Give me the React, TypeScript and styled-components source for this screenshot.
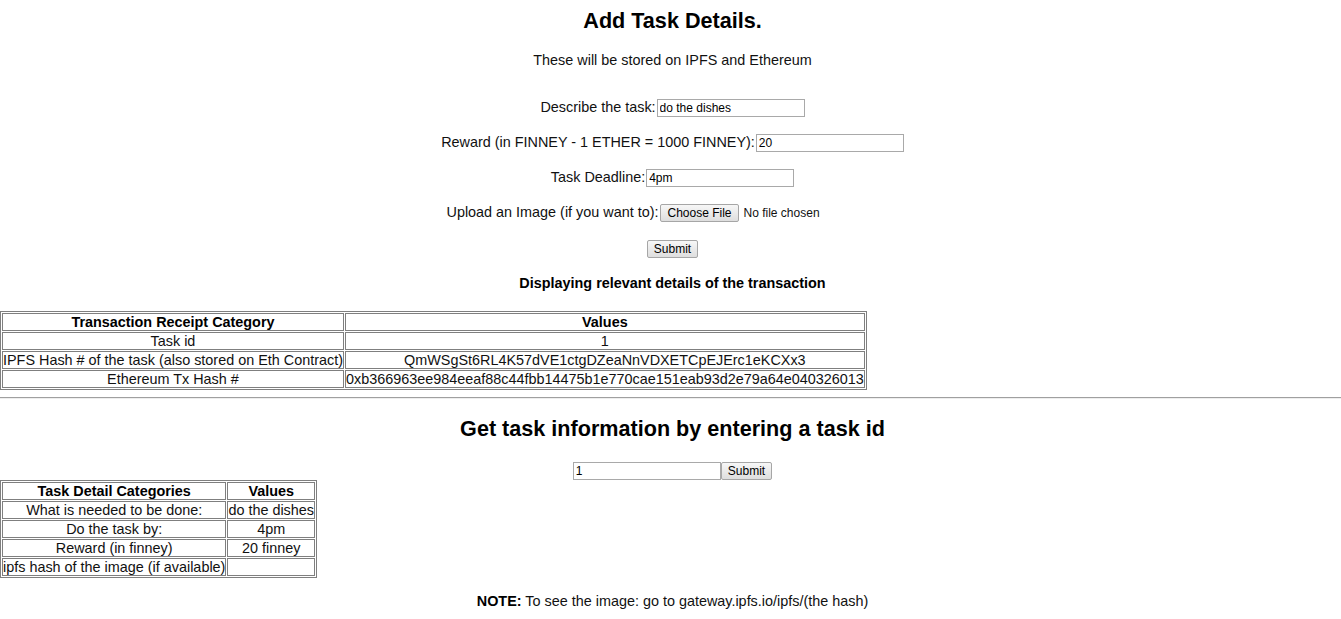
import React from "react";
import styled, { createGlobalStyle } from "styled-components";

const GlobalStyle = createGlobalStyle`
  html, body {
    margin: 0;
    padding: 0;
    background: #ffffff;
  }
  body {
    font-family: "Liberation Sans", Arial, sans-serif;
    font-size: 14.4px;
    color: #000000;
  }
`;

const Page = styled.div`
  display: flex;
  flex-direction: column;
  padding-top: 8px;
`;

const Title = styled.h2<{ $mt?: number }>`
  margin: ${(p) => p.$mt ?? 0}px 0 0;
  padding-left: 4px;
  text-align: center;
  font-size: 21.6px;
  line-height: 25px;
  font-weight: bold;
  color: #000;
`;

const Text = styled.p<{ $mt: number }>`
  margin: ${(p) => p.$mt}px 0 0;
  padding-left: 4px;
  text-align: center;
  line-height: 17px;
  color: #111;
`;

const Heading = styled.h4<{ $mt: number }>`
  margin: ${(p) => p.$mt}px 0 0;
  padding-left: 4px;
  text-align: center;
  font-size: 14.4px;
  line-height: 17px;
  font-weight: bold;
  color: #000;
`;

const FieldRow = styled.div<{ $mt: number }>`
  display: flex;
  justify-content: center;
  align-items: baseline;
  height: 18px;
  margin-top: ${(p) => p.$mt}px;
  padding-left: 4px;
`;

const Label = styled.label`
  line-height: 17px;
  white-space: nowrap;
  color: #111;
`;

const TextInput = styled.input<{ $ml?: number }>`
  box-sizing: border-box;
  width: 148px;
  height: 18px;
  margin: 0 0 0 ${(p) => p.$ml ?? 1}px;
  padding: 1px 2px;
  border: 1px solid #a9a9a9;
  border-radius: 0;
  background: #fff;
  font: 12px "Liberation Sans", Arial, sans-serif;
  color: #000;
  outline: none;
`;

const Button = styled.button`
  box-sizing: border-box;
  height: 18px;
  margin: 0;
  padding: 0 6px;
  border: 1px solid #a6a6a6;
  border-radius: 2px;
  background: linear-gradient(#f7f7f7, #dedede);
  font: 12px/14px "Liberation Sans", Arial, sans-serif;
  color: #000;
  cursor: default;
`;

const FileField = styled.span`
  display: inline-flex;
  align-items: baseline;
  width: 238px;
  margin-left: 2px;
`;

const FileName = styled.span`
  margin-left: 5px;
  font-size: 12px;
  color: #111;
  white-space: nowrap;
`;

const Table = styled.table<{ $mt: number }>`
  align-self: flex-start;
  margin-top: ${(p) => p.$mt}px;
  border-collapse: separate;
  border-spacing: 1px;
  border: 1px solid #7f7f7f;
  font-size: 14.4px;
`;

const Th = styled.th`
  border: 1px solid #7f7f7f;
  padding: 0;
  line-height: 16px;
  font-weight: bold;
  text-align: center;
  white-space: nowrap;
  color: #000;
`;

const Td = styled.td`
  border: 1px solid #7f7f7f;
  padding: 0;
  line-height: 16px;
  text-align: center;
  white-space: nowrap;
  color: #111;
`;

const Rule = styled.hr<{ $mt: number }>`
  align-self: stretch;
  margin: ${(p) => p.$mt}px 0 0;
  height: 0;
  border: 0;
  border-top: 1px solid #a0a0a0;
  border-bottom: 1px solid #eeeeee;
`;

const Note = styled.p<{ $mt: number }>`
  margin: ${(p) => p.$mt}px 0 0;
  padding-left: 4px;
  text-align: center;
  line-height: 17px;
  color: #111;
  strong {
    color: #000;
  }
`;

const receipt = [
  { k: "Task id", v: "1" },
  {
    k: "IPFS Hash # of the task (also stored on Eth Contract)",
    v: "QmWSgSt6RL4K57dVE1ctgDZeaNnVDXETCpEJErc1eKCXx3",
  },
  {
    k: "Ethereum Tx Hash #",
    v: "0xb366963ee984eeaf88c44fbb14475b1e770cae151eab93d2e79a64e040326013",
  },
];

const details = [
  { k: "What is needed to be done:", v: "do the dishes" },
  { k: "Do the task by:", v: "4pm" },
  { k: "Reward (in finney)", v: "20 finney" },
  { k: "ipfs hash of the image (if available)", v: "" },
];

export default function App() {
  return (
    <>
      <GlobalStyle />
      <Page>
        <Title>Add Task Details.</Title>
        <Text $mt={19}>These will be stored on IPFS and Ethereum</Text>

        <FieldRow $mt={29.5}>
          <Label>Describe the task:</Label>
          <TextInput type="text" defaultValue="do the dishes" />
        </FieldRow>
        <FieldRow $mt={17}>
          <Label>Reward (in FINNEY - 1 ETHER = 1000 FINNEY):</Label>
          <TextInput type="text" defaultValue="20" />
        </FieldRow>
        <FieldRow $mt={17}>
          <Label>Task Deadline:</Label>
          <TextInput type="text" defaultValue="4pm" />
        </FieldRow>
        <FieldRow $mt={17}>
          <Label>Upload an Image (if you want to):</Label>
          <FileField>
            <Button type="button">Choose File</Button>
            <FileName>No file chosen</FileName>
          </FileField>
        </FieldRow>
        <FieldRow $mt={18.5}>
          <Button type="button">Submit</Button>
        </FieldRow>

        <Heading $mt={17.2}>Displaying relevant details of the transaction</Heading>

        <Table $mt={18.8}>
          <thead>
            <tr>
              <Th>Transaction Receipt Category</Th>
              <Th>Values</Th>
            </tr>
          </thead>
          <tbody>
            {receipt.map((r) => (
              <tr key={r.k}>
                <Td>{r.k}</Td>
                <Td>{r.v}</Td>
              </tr>
            ))}
          </tbody>
        </Table>

        <Rule $mt={7} />

        <Title $mt={17.4}>Get task information by entering a task id</Title>
        <FieldRow $mt={20.6}>
          <TextInput type="text" defaultValue="1" $ml={0} />
          <Button type="button">Submit</Button>
        </FieldRow>

        <Table $mt={0}>
          <thead>
            <tr>
              <Th>Task Detail Categories</Th>
              <Th>Values</Th>
            </tr>
          </thead>
          <tbody>
            {details.map((r) => (
              <tr key={r.k}>
                <Td>{r.k}</Td>
                <Td>{r.v}</Td>
              </tr>
            ))}
          </tbody>
        </Table>

        <Note $mt={15.4}>
          <strong>NOTE:</strong> To see the image: go to gateway.ipfs.io/ipfs/(the hash)
        </Note>
      </Page>
    </>
  );
}
